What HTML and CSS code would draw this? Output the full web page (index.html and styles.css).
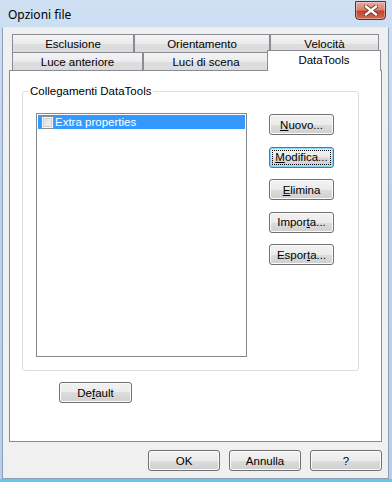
FILE: index.html
```html
<!DOCTYPE html>
<html>
<head>
<meta charset="utf-8">
<link rel="stylesheet" href="styles.css">
</head>
<body>
<div class="window">
  <div class="titlebar">
    <span class="title">Opzioni file</span>
    <div class="close">
      <svg width="14" height="11" viewBox="0 0 14 11">
        <path d="M2 1.5 L12 9.5 M12 1.5 L2 9.5" stroke="#5a2a25" stroke-width="4" stroke-linecap="square"/>
        <path d="M2 1.5 L12 9.5 M12 1.5 L2 9.5" stroke="#ffffff" stroke-width="2.4" stroke-linecap="square"/>
      </svg>
    </div>
  </div>
  <div class="client">
    <div class="tabctl">
      <div class="tabrows">
        <div class="tabrow">
          <div class="tab w122">Esclusione</div>
          <div class="tab w136">Orientamento</div>
          <div class="tab w109">Velocità</div>
        </div>
        <div class="tabrow">
          <div class="tab w131">Luce anteriore</div>
          <div class="tab w126">Luci di scena</div>
          <div class="tab sel">DataTools</div>
        </div>
      </div>
      <div class="panel">
        <fieldset class="group">
          <legend class="legend">Collegamenti DataTools</legend>
          <div class="grouprow">
            <div class="list">
              <div class="item">
                <span class="check"></span>
                <span class="itemtext">Extra properties</span>
              </div>
            </div>
            <div class="btncol">
              <button class="btn side"><u>N</u>uovo...</button>
              <button class="btn side focus"><u>M</u>odifica...</button>
              <button class="btn side"><u>E</u>limina</button>
              <button class="btn side">Impor<u>t</u>a...</button>
              <button class="btn side">Espor<u>t</u>a...</button>
            </div>
          </div>
        </fieldset>
        <button class="btn default">De<u>f</u>ault</button>
      </div>
    </div>
    <div class="footer">
      <button class="btn foot">OK</button>
      <button class="btn foot">Annulla</button>
      <button class="btn foot">?</button>
    </div>
  </div>
</div>
</body>
</html>
```

FILE: styles.css
```css
* { box-sizing: border-box; }
html, body { margin: 0; padding: 0; }
body {
  width: 392px;
  height: 482px;
  overflow: hidden;
  font-family: "Liberation Sans", Arial, sans-serif;
  font-size: 11.5px;
  color: #000;
  background: linear-gradient(to bottom, #cfe0f3 0%, #bcd3ec 40%, #b7cfe9 100%);
}
.window {
  width: 392px;
  height: 482px;
  display: flex;
  flex-direction: column;
  border-bottom: 3px solid #6cc3ec;
}
.titlebar {
  height: 27px;
  flex: none;
  display: flex;
  align-items: flex-start;
  justify-content: space-between;
  padding-left: 8px;
  padding-right: 6px;
}
.title {
  font-family: "Noto Sans", "Open Sans", sans-serif;
  font-size: 12px;
  margin-top: 6px;
  color: #000;
}
.close {
  margin-top: 1px;
  width: 31px;
  height: 19px;
  border: 1px solid #6b2a22;
  border-radius: 0 0 4px 4px;
  background: linear-gradient(to bottom, #e9a99c 0%, #d7826f 45%, #c0452f 55%, #d06a52 100%);
  box-shadow: inset 0 0 0 1px rgba(255,255,255,0.35);
  display: flex;
  align-items: center;
  justify-content: center;
}
.client {
  flex: 1;
  margin: 0 3px 0 2px;
  background: #f0f0f0;
  border: 1px solid #8a9fb8;
  border-top: 1px solid #e8eef6;
  padding: 6px 0 0 6px;
  display: flex;
  flex-direction: column;
}
.tabctl {
  width: 373px;
}
.tabrows {
  padding: 0 3px;
}
.tabrow {
  display: flex;
  height: 18px;
}
.tab {
  height: 18px;
  border: 1px solid #898c95;
  border-bottom: none;
  background: linear-gradient(to bottom, #f4f4f4 0%, #ebebeb 50%, #dedede 50%, #dbdbdb 100%);
  display: flex;
  align-items: center;
  justify-content: center;
  padding-top: 1px;
  white-space: nowrap;
}
.w122 { width: 122px; }
.w136 { width: 136px; }
.w109 { width: 109px; }
.w131 { width: 131px; }
.w126 { width: 126px; }
.tab.sel {
  width: 114px;
  height: 21px;
  margin: -2px -2px -1px -2px;
  background: #ffffff;
  position: relative;
  z-index: 1;
  align-items: flex-start;
  padding-top: 3px;
}
.panel {
  height: 372px;
  border: 1px solid #898c95;
  background: #ffffff;
  padding: 0 0 0 12px;
  display: flex;
  flex-direction: column;
  align-items: flex-start;
}
.group {
  margin: 14px 0 0 0;
  width: 337px;
  border: 1px solid #d5dfe5;
  border-radius: 3px;
  padding: 0 0 13px 13px;
  min-width: 0;
}
.legend {
  padding: 0 2px;
  margin-left: -8px;
  line-height: 13px;
}
.grouprow {
  display: flex;
  align-items: flex-start;
  margin-top: 15px;
}
.list {
  width: 211px;
  height: 244px;
  border: 1px solid #828790;
  background: #fff;
  padding: 1px;
}
.item {
  height: 14px;
  background: #3399ff;
  display: flex;
  align-items: center;
  padding-left: 3px;
}
.check {
  width: 13px;
  height: 13px;
  border: 1px solid #8e8f8f;
  background: linear-gradient(135deg, #dcdcdc 0%, #f4f4f4 100%);
  box-shadow: inset 0 0 0 1px #f4f4f4, inset 0 0 0 2px #cfcfcf;
}
.itemtext {
  color: #fff;
  margin-left: 1px;
}
.btncol {
  margin-left: 22px;
  margin-top: 1px;
  display: flex;
  flex-direction: column;
  gap: 11.5px;
}
.btn {
  font-family: "Liberation Sans", Arial, sans-serif;
  font-size: 11.5px;
  color: #000;
  height: 21px;
  padding: 0;
  border: 1px solid #707070;
  border-radius: 3px;
  background: linear-gradient(to bottom, #f2f2f2 0%, #ebebeb 50%, #dddddd 50%, #cfcfcf 100%);
  box-shadow: inset 0 0 0 1px #fbfbfb;
}
.btn u { text-decoration: underline; }
.side { width: 65px; }
.focus {
  border-color: #3c7fb1;
  box-shadow: inset 0 0 0 1px #8ed0f6;
  outline: 1px dotted #000;
  outline-offset: -4px;
}
.default {
  width: 73px;
  margin-top: 11px;
  margin-left: 37px;
}
.footer {
  display: flex;
  justify-content: flex-end;
  gap: 9px;
  padding-right: 6px;
  margin-top: 8px;
}
.foot { width: 72px; }
```
